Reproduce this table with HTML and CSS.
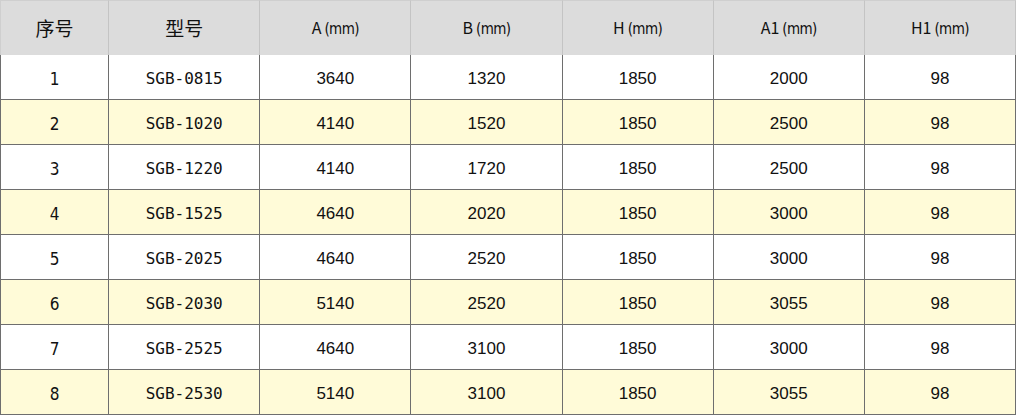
FILE: index.html
```html
<!DOCTYPE html>
<html lang="zh">
<head>
<meta charset="utf-8">
<link rel="stylesheet" href="styles.css">
</head>
<body>
<table class="spec">
  <colgroup>
    <col class="c-no"><col class="c-w"><col class="c-w"><col class="c-w"><col class="c-w"><col class="c-w"><col class="c-w">
  </colgroup>
  <thead>
    <tr>
      <th class="cn">序号</th>
      <th class="cn">型号</th>
      <th>A<span class="unit">(mm)</span></th>
      <th>B<span class="unit">(mm)</span></th>
      <th>H<span class="unit">(mm)</span></th>
      <th>A1<span class="unit">(mm)</span></th>
      <th>H1<span class="unit">(mm)</span></th>
    </tr>
  </thead>
  <tbody>
    <tr><td class="idx">1</td><td class="model">SGB-0815</td><td>3640</td><td>1320</td><td>1850</td><td>2000</td><td>98</td></tr>
    <tr><td class="idx">2</td><td class="model">SGB-1020</td><td>4140</td><td>1520</td><td>1850</td><td>2500</td><td>98</td></tr>
    <tr><td class="idx">3</td><td class="model">SGB-1220</td><td>4140</td><td>1720</td><td>1850</td><td>2500</td><td>98</td></tr>
    <tr><td class="idx">4</td><td class="model">SGB-1525</td><td>4640</td><td>2020</td><td>1850</td><td>3000</td><td>98</td></tr>
    <tr><td class="idx">5</td><td class="model">SGB-2025</td><td>4640</td><td>2520</td><td>1850</td><td>3000</td><td>98</td></tr>
    <tr><td class="idx">6</td><td class="model">SGB-2030</td><td>5140</td><td>2520</td><td>1850</td><td>3055</td><td>98</td></tr>
    <tr><td class="idx">7</td><td class="model">SGB-2525</td><td>4640</td><td>3100</td><td>1850</td><td>3000</td><td>98</td></tr>
    <tr><td class="idx">8</td><td class="model">SGB-2530</td><td>5140</td><td>3100</td><td>1850</td><td>3055</td><td>98</td></tr>
  </tbody>
</table>
</body>
</html>
```

FILE: styles.css
```css
html, body {
  margin: 0;
  padding: 0;
  background: #ffffff;
}

.spec {
  width: 1016px;
  table-layout: fixed;
  border-collapse: separate;
  border-spacing: 0;
  font-family: "Liberation Sans", "Noto Sans CJK SC", sans-serif;
  color: #111;
}

.c-no { width: 109px; }
.c-w { width: 151px; }

.spec th {
  height: 55px;
  box-sizing: border-box;
  background: #dcdcdc;
  border-top: 1px solid #cfcfcf;
  border-right: 1px solid #c4c4c4;
  font-family: "Noto Sans CJK SC", sans-serif;
  font-weight: 400;
  font-size: 16px;
  line-height: 20px;
  padding: 0;
  text-align: center;
  vertical-align: middle;
}

.spec th.cn {
  font-size: 19px;
}

.spec th:first-child {
  border-left: 1px solid #cfcfcf;
}

.unit {
  font-family: "DejaVu Sans Condensed", "DejaVu Sans", sans-serif;
  font-size: 15px;
  margin-left: 3px;
  letter-spacing: -0.6px;
}

.spec td {
  height: 45px;
  box-sizing: border-box;
  padding: 4px 0 0;
  text-align: center;
  vertical-align: middle;
  font-size: 17px;
  line-height: 20px;
  border-right: 1px solid #6e6e6e;
  border-bottom: 1px solid #6e6e6e;
}

.spec td:first-child {
  border-left: 1px solid #6e6e6e;
}

.spec tbody tr:nth-child(even) td {
  background: #fffbd8;
}

.spec td.model {
  font-family: "DejaVu Sans Mono", monospace;
  font-size: 16px;
}

.spec td.idx {
  font-family: "DejaVu Sans Condensed", "DejaVu Sans", sans-serif;
  font-size: 17px;
}
```
